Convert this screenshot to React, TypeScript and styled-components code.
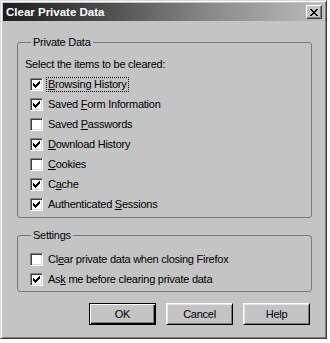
import React from "react";
import styled, { createGlobalStyle } from "styled-components";

const GlobalStyle = createGlobalStyle`
  html, body {
    margin: 0;
    padding: 0;
    background: #ffffff;
  }
  body {
    font-family: "Liberation Sans", Arial, sans-serif;
    font-size: 11px;
    color: #000;
  }
`;

const FACE = "#c4c4c4";

const Window = styled.div`
  box-sizing: border-box;
  width: 327px;
  height: 339px;
  display: flex;
  flex-direction: column;
  background: ${FACE};
  border-top: 1px solid #d8d8d8;
  border-left: 1px solid #d8d8d8;
  border-right: 1px solid #3c3c3c;
  border-bottom: 1px solid #3c3c3c;
  box-shadow: inset 1px 1px 0 #ffffff, inset -1px -1px 0 #7e7e7e;
  padding: 2px;
`;

const TitleBar = styled.div`
  height: 18px;
  display: flex;
  align-items: center;
  justify-content: space-between;
  padding: 0 2px 0 3px;
  background: linear-gradient(to right, #1e1e1e 0%, #4a4a4a 30%, #8a8a8a 65%, #bcbcbc 100%);
`;

const Title = styled.span`
  color: #ffffff;
  font-weight: 700;
  font-size: 11.5px;
  line-height: 18px;
`;

const CloseButton = styled.div`
  box-sizing: border-box;
  width: 16px;
  height: 14px;
  display: flex;
  align-items: center;
  justify-content: center;
  background: ${FACE};
  border-top: 1px solid #ffffff;
  border-left: 1px solid #ffffff;
  border-right: 1px solid #3c3c3c;
  border-bottom: 1px solid #3c3c3c;
  box-shadow: inset -1px -1px 0 #7e7e7e;
`;

const Body = styled.div`
  display: flex;
  flex-direction: column;
  padding: 15px 12px 0 14px;
`;

const Group = styled.fieldset<{ $gap?: number }>`
  margin: ${(p) => p.$gap || 0}px 0 0 0;
  padding: ${(p) => (p.$gap ? "7px 0 2px 7px" : "5px 0 3px 7px")};
  border: 1px solid #7a7a7a;
  border-radius: 3px;
  min-inline-size: 0;
  display: flex;
  flex-direction: column;
`;

const Legend = styled.legend`
  margin-left: 6px;
  padding: 0 2px;
  line-height: 13px;
  letter-spacing: -0.25px;
`;

const Intro = styled.div`
  height: 20px;
  line-height: 20px;
  letter-spacing: -0.25px;
`;

const Row = styled.div`
  height: 20px;
  display: flex;
  align-items: center;
  padding-left: 5px;
`;

const Box = styled.span`
  box-sizing: border-box;
  width: 13px;
  height: 13px;
  flex: none;
  display: flex;
  align-items: center;
  justify-content: center;
  background: #ffffff;
  border-top: 1px solid #7e7e7e;
  border-left: 1px solid #7e7e7e;
  border-right: 1px solid #ffffff;
  border-bottom: 1px solid #ffffff;
  box-shadow: inset 1px 1px 0 #3c3c3c, inset -1px -1px 0 #d8d8d8;
`;

const Label = styled.span<{ $focused?: boolean }>`
  margin-left: 3px;
  padding: 1px 2px;
  line-height: 13px;
  letter-spacing: -0.25px;
  white-space: nowrap;
  outline: ${(p) => (p.$focused ? "1px dotted #000" : "none")};
  outline-offset: -1px;
`;

const Hot = styled.u`
  text-decoration: underline;
  text-underline-offset: 1px;
`;

const ButtonRow = styled.div`
  display: flex;
  justify-content: flex-end;
  gap: 10px;
  margin-top: 11px;
  padding-right: 2px;
`;

const Button = styled.div<{ $default?: boolean }>`
  box-sizing: border-box;
  width: 67px;
  height: 22px;
  display: flex;
  align-items: center;
  justify-content: center;
  letter-spacing: -0.25px;
  background: ${FACE};
  border: 1px solid ${(p) => (p.$default ? "#000" : "transparent")};
  box-shadow: ${(p) =>
    p.$default
      ? "inset 1px 1px 0 #ffffff, inset -1px -1px 0 #000000, inset -2px -2px 0 #7e7e7e"
      : "inset 1px 1px 0 #ffffff, inset -1px -1px 0 #7e7e7e"};
  ${(p) =>
    p.$default
      ? ""
      : "border-top-color: #ffffff; border-left-color: #ffffff; border-right-color: #000000; border-bottom-color: #000000; box-shadow: inset 1px 1px 0 #e6e6e6, inset -1px -1px 0 #7e7e7e;"}
`;

type Item = { text: string; hot: number; checked: boolean; focused?: boolean };

const privateItems: Item[] = [
  { text: "Browsing History", hot: 0, checked: true, focused: true },
  { text: "Saved Form Information", hot: 6, checked: true },
  { text: "Saved Passwords", hot: 6, checked: false },
  { text: "Download History", hot: 0, checked: true },
  { text: "Cookies", hot: 0, checked: false },
  { text: "Cache", hot: 1, checked: true },
  { text: "Authenticated Sessions", hot: 14, checked: true },
];

const settingItems: Item[] = [
  { text: "Clear private data when closing Firefox", hot: 2, checked: false },
  { text: "Ask me before clearing private data", hot: 2, checked: true },
];

const Check = () => (
  <svg width="7" height="7" viewBox="0 0 7 7" shapeRendering="crispEdges">
    <path d="M0 2h1v1h1v1h1v-1h1v-1h1v-1h1v-1h1v3h-1v1h-1v1h-1v1h-1v1h-1v-1h-1v-1h-1z" fill="#000" />
  </svg>
);

const CloseGlyph = () => (
  <svg width="8" height="7" viewBox="0 0 8 7" shapeRendering="crispEdges">
    <path
      d="M0 0h2v1h1v1h2v-1h1v-1h2v1h-1v1h-1v1h-1v1h1v1h1v1h1v1h-2v-1h-1v-1h-2v1h-1v1h-2v-1h1v-1h1v-1h1v-1h-1v-1h-1v-1h-1z"
      fill="#000"
    />
  </svg>
);

const CheckRow = ({ item }: { item: Item }) => (
  <Row>
    <Box>{item.checked && <Check />}</Box>
    <Label $focused={item.focused}>
      {item.text.slice(0, item.hot)}
      <Hot>{item.text[item.hot]}</Hot>
      {item.text.slice(item.hot + 1)}
    </Label>
  </Row>
);

export default function App() {
  return (
    <>
      <GlobalStyle />
      <Window>
        <TitleBar>
          <Title>Clear Private Data</Title>
          <CloseButton>
            <CloseGlyph />
          </CloseButton>
        </TitleBar>
        <Body>
          <Group>
            <Legend>Private Data</Legend>
            <Intro>Select the items to be cleared:</Intro>
            {privateItems.map((it) => (
              <CheckRow key={it.text} item={it} />
            ))}
          </Group>
          <Group $gap={11}>
            <Legend>Settings</Legend>
            {settingItems.map((it) => (
              <CheckRow key={it.text} item={it} />
            ))}
          </Group>
          <ButtonRow>
            <Button $default>OK</Button>
            <Button>Cancel</Button>
            <Button>Help</Button>
          </ButtonRow>
        </Body>
      </Window>
    </>
  );
}
